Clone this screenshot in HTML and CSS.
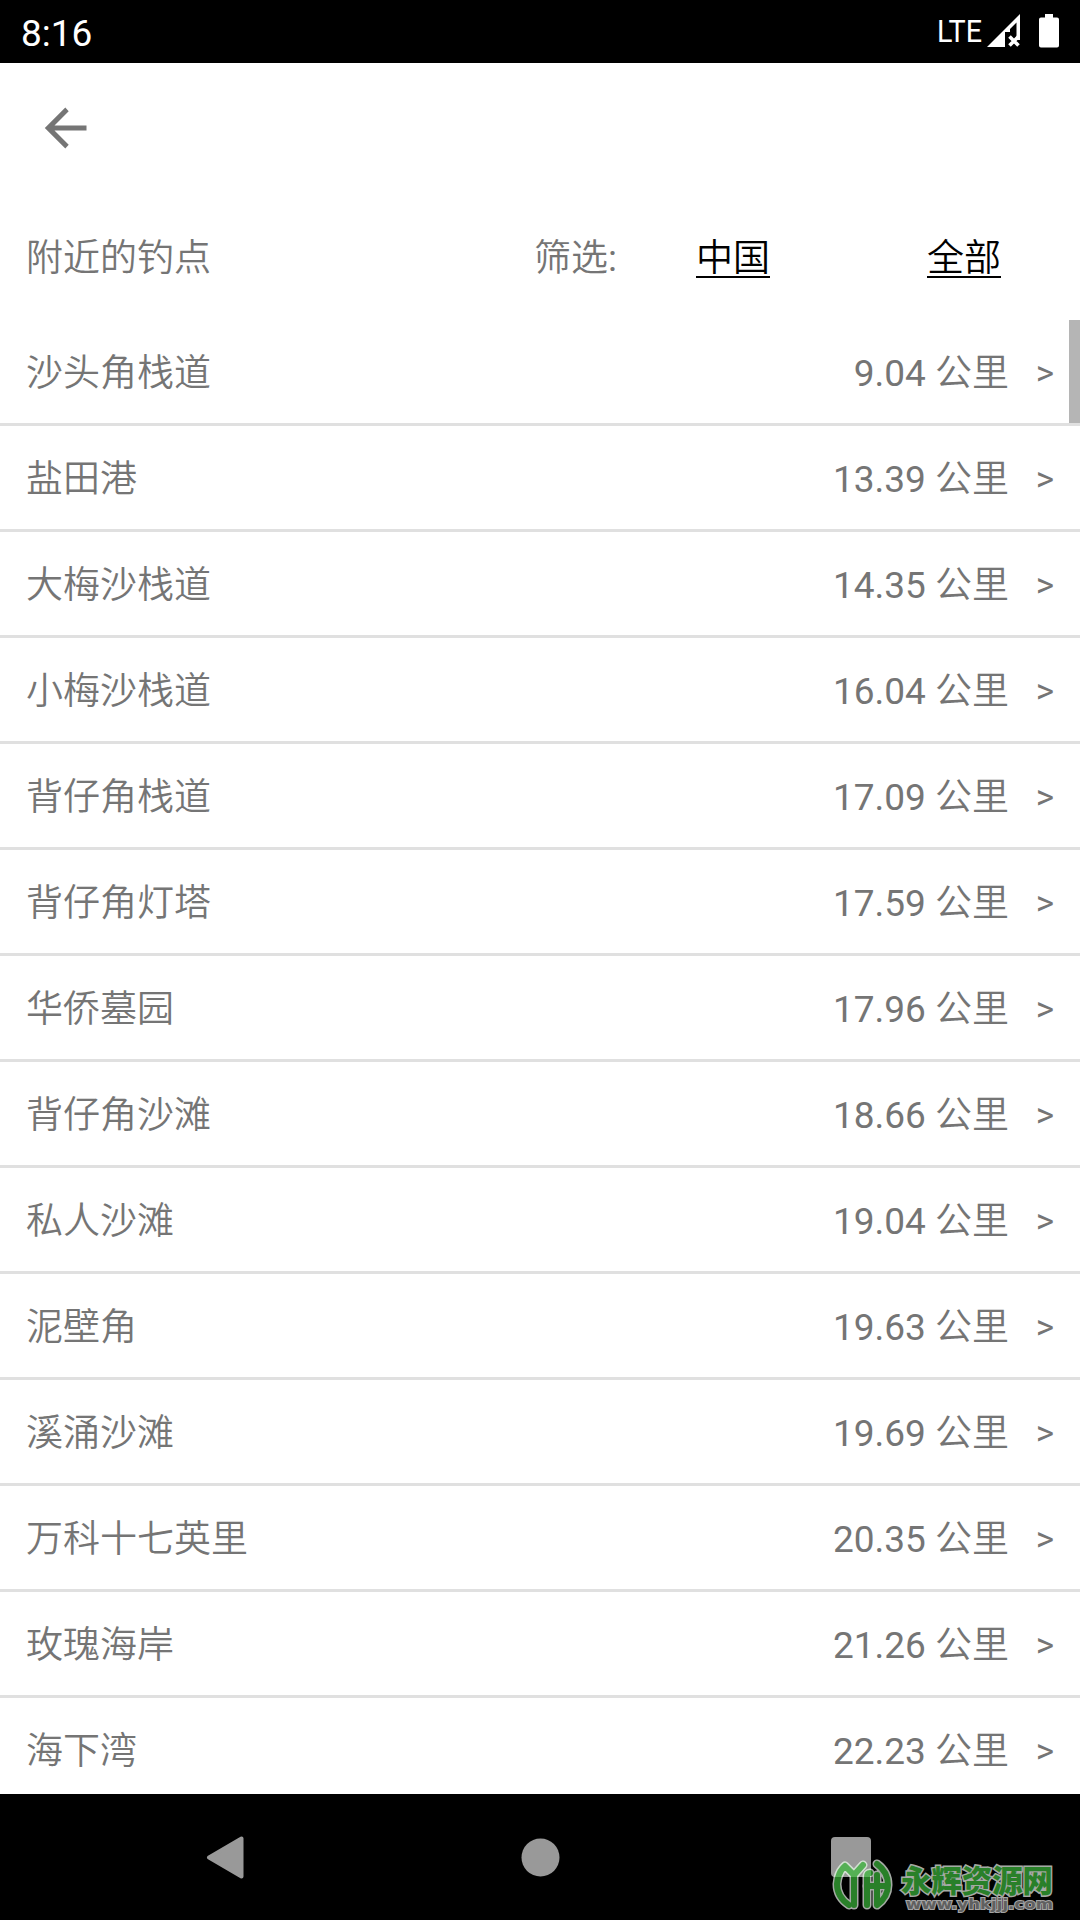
FILE: index.html
```html
<!DOCTYPE html>
<html lang="zh-CN">
<head>
<meta charset="utf-8">
<title>附近的钓点</title>
<link rel="stylesheet" href="styles.css">
</head>
<body>
<div class="screen">
  <header class="status">
    <span class="clock">8:16</span>
    <svg class="status-icons" width="122" height="63" viewBox="938 0 122 63">
      <text class="network" x="937" y="42" textLength="45" lengthAdjust="spacingAndGlyphs">LTE</text>
      <path fill="#fff" d="M1020 14V40H1016.500V22.500L1010 29V32H1005V47H987Z"/>
      <path stroke="#fff" stroke-width="3.600" d="M1009.500 36.500L1018.500 45.500M1018.500 36.500L1009.500 45.500"/>
      <path fill="#fff" d="M1045 14h8v3.500h4a2 2 0 0 1 2 2v26a2 2 0 0 1-2 2h-16a2 2 0 0 1-2-2v-26a2 2 0 0 1 2-2h4z"/>
    </svg>
  </header>
  <nav class="toolbar">
    <svg class="back" width="42" height="42" viewBox="0 0 42 42"><path fill="#757575" d="M42.500 18.400V23.600H10.500L24.700 37.800 21.300 41.500 .8 21 21.300.500 24.700 4.200 10.500 18.400Z"/></svg>
  </nav>
  <section class="filters">
    <span class="title">附近的钓点</span>
    <span class="label">筛选<span class="colon">:</span></span>
    <a class="choice country">中国</a>
    <a class="choice">全部</a>
  </section>
  <main class="list-wrap">
    <ul class="list">
      <li class="row"><span class="name">沙头角栈道</span><span class="distance">9.04 <span class="unit">公里</span></span><span class="more">&gt;</span></li>
      <li class="row"><span class="name">盐田港</span><span class="distance">13.39 <span class="unit">公里</span></span><span class="more">&gt;</span></li>
      <li class="row"><span class="name">大梅沙栈道</span><span class="distance">14.35 <span class="unit">公里</span></span><span class="more">&gt;</span></li>
      <li class="row"><span class="name">小梅沙栈道</span><span class="distance">16.04 <span class="unit">公里</span></span><span class="more">&gt;</span></li>
      <li class="row"><span class="name">背仔角栈道</span><span class="distance">17.09 <span class="unit">公里</span></span><span class="more">&gt;</span></li>
      <li class="row"><span class="name">背仔角灯塔</span><span class="distance">17.59 <span class="unit">公里</span></span><span class="more">&gt;</span></li>
      <li class="row"><span class="name">华侨墓园</span><span class="distance">17.96 <span class="unit">公里</span></span><span class="more">&gt;</span></li>
      <li class="row"><span class="name">背仔角沙滩</span><span class="distance">18.66 <span class="unit">公里</span></span><span class="more">&gt;</span></li>
      <li class="row"><span class="name">私人沙滩</span><span class="distance">19.04 <span class="unit">公里</span></span><span class="more">&gt;</span></li>
      <li class="row"><span class="name">泥壁角</span><span class="distance">19.63 <span class="unit">公里</span></span><span class="more">&gt;</span></li>
      <li class="row"><span class="name">溪涌沙滩</span><span class="distance">19.69 <span class="unit">公里</span></span><span class="more">&gt;</span></li>
      <li class="row"><span class="name">万科十七英里</span><span class="distance">20.35 <span class="unit">公里</span></span><span class="more">&gt;</span></li>
      <li class="row"><span class="name">玫瑰海岸</span><span class="distance">21.26 <span class="unit">公里</span></span><span class="more">&gt;</span></li>
      <li class="row"><span class="name">海下湾</span><span class="distance">22.23 <span class="unit">公里</span></span><span class="more">&gt;</span></li>
    </ul>
    <div class="scrollbar"></div>
  </main>
  <footer class="navbar">
    <svg width="38" height="43" viewBox="0 0 38 43"><path fill="#999" stroke="#999" stroke-width="4" stroke-linejoin="round" d="M3 21.500L35.500 2.500V40.500Z"/></svg>
    <svg class="home" width="39" height="39" viewBox="0 0 39 39"><circle cx="19.500" cy="19.500" r="19" fill="#999"/></svg>
    <svg width="40" height="40" viewBox="0 0 40 40"><rect width="40" height="40" rx="4" fill="#999"/></svg>
    <svg class="watermark" width="250" height="70" viewBox="830 1850 250 70">
      <defs>
        <g id="mark">
          <path d="M849 1905Q837 1897 837 1884Q838 1872 845 1866L854 1875L863 1865"/>
          <path d="M854 1876V1905"/>
          <path d="M867 1905V1877Q867 1873 870 1873"/>
          <path d="M867 1886H885"/>
          <path d="M877 1864Q888 1872 888 1885Q888 1897 877 1905V1875"/>
        </g>
        <clipPath id="over-button"><rect x="831" y="1837" width="40" height="40"/></clipPath>
      </defs>
      <use href="#mark" class="logo-halo"/>
      <use href="#mark" class="logo"/>
      <g clip-path="url(#over-button)">
        <use href="#mark" class="logo-halo light"/>
        <use href="#mark" class="logo light"/>
      </g>
      <text class="brand" x="901" y="1892" textLength="152" lengthAdjust="spacingAndGlyphs">永辉资源网</text>
      <text class="url" x="906" y="1909" textLength="147" lengthAdjust="spacingAndGlyphs">www.yhkjjj.com</text>
    </svg>
  </footer>
</div>
</body>
</html>
```
FILE: styles.css
```css
* { box-sizing: border-box; }
body { margin: 0; }
.screen {
  width: 1080px;
  height: 1920px;
  display: flex;
  flex-direction: column;
  overflow: hidden;
  background: #fff;
  color: #757575;
  font: 37px/50px Roboto, "Noto Sans CJK SC", sans-serif;
}
.status {
  height: 63px;
  flex: none;
  display: flex;
  justify-content: space-between;
  padding: 0 20px 0 21px;
  background: #000;
  color: #fff;
}
.clock { font-size: 37px; line-height: 67px; }
.network { font-size: 32px; fill: #fff; }
.toolbar { height: 131px; flex: none; padding: 44px 44px; }
.back { display: block; overflow: visible; }
.filters {
  height: 126px;
  flex: none;
  display: flex;
  align-items: flex-start;
  padding: 40px 79px 0 26px;
}
.title, .label, .choice, .name, .unit { font-weight: 350; }
.title { width: 508px; }
.label { flex: 1; }
.colon { font-weight: 400; }
.choice {
  color: #000;
  text-decoration: underline;
  text-decoration-thickness: 2px;
  text-underline-offset: 5px;
  text-decoration-skip-ink: none;
}
.country { margin-right: 157px; }
.list-wrap { position: relative; flex: 1; min-height: 0; overflow: hidden; }
.list { margin: 0; padding: 0; list-style: none; }
.row {
  height: 106px;
  display: flex;
  align-items: center;
  padding: 4px 26px 0;
  border-bottom: 3px solid #e0e0e0;
}
.distance { margin-left: auto; }
.more { width: 45px; text-align: right; font-size: 35px; }
.scrollbar {
  position: absolute;
  top: 0;
  right: 0;
  width: 11px;
  height: 103px;
  background: #b5b5b5;
}
.navbar {
  position: relative;
  height: 126px;
  flex: none;
  display: flex;
  justify-content: space-between;
  align-items: center;
  padding: 0 209px 0 206px;
  background: #000;
}
.home { margin-left: 5px; }
.watermark { position: absolute; right: 0; bottom: 0; }
.logo, .logo-halo { fill: none; stroke: #298029; stroke-width: 6; stroke-linejoin: round; stroke-linecap: round; }
.logo-halo { stroke: #a5aaa5; stroke-width: 9; }
.logo.light { stroke: #55b055; }
.logo-halo.light { stroke: #d2e0d2; }
.brand {
  font: 900 31px/1 "Noto Sans CJK SC", sans-serif;
  fill: #298029;
  stroke: #a5aaa5;
  stroke-width: 3px;
  paint-order: stroke;
}
.url {
  font: bold 14px/1 "DejaVu Sans", sans-serif;
  fill: #606060;
  stroke: #a5a5a5;
  stroke-width: 2px;
  paint-order: stroke;
}
```
